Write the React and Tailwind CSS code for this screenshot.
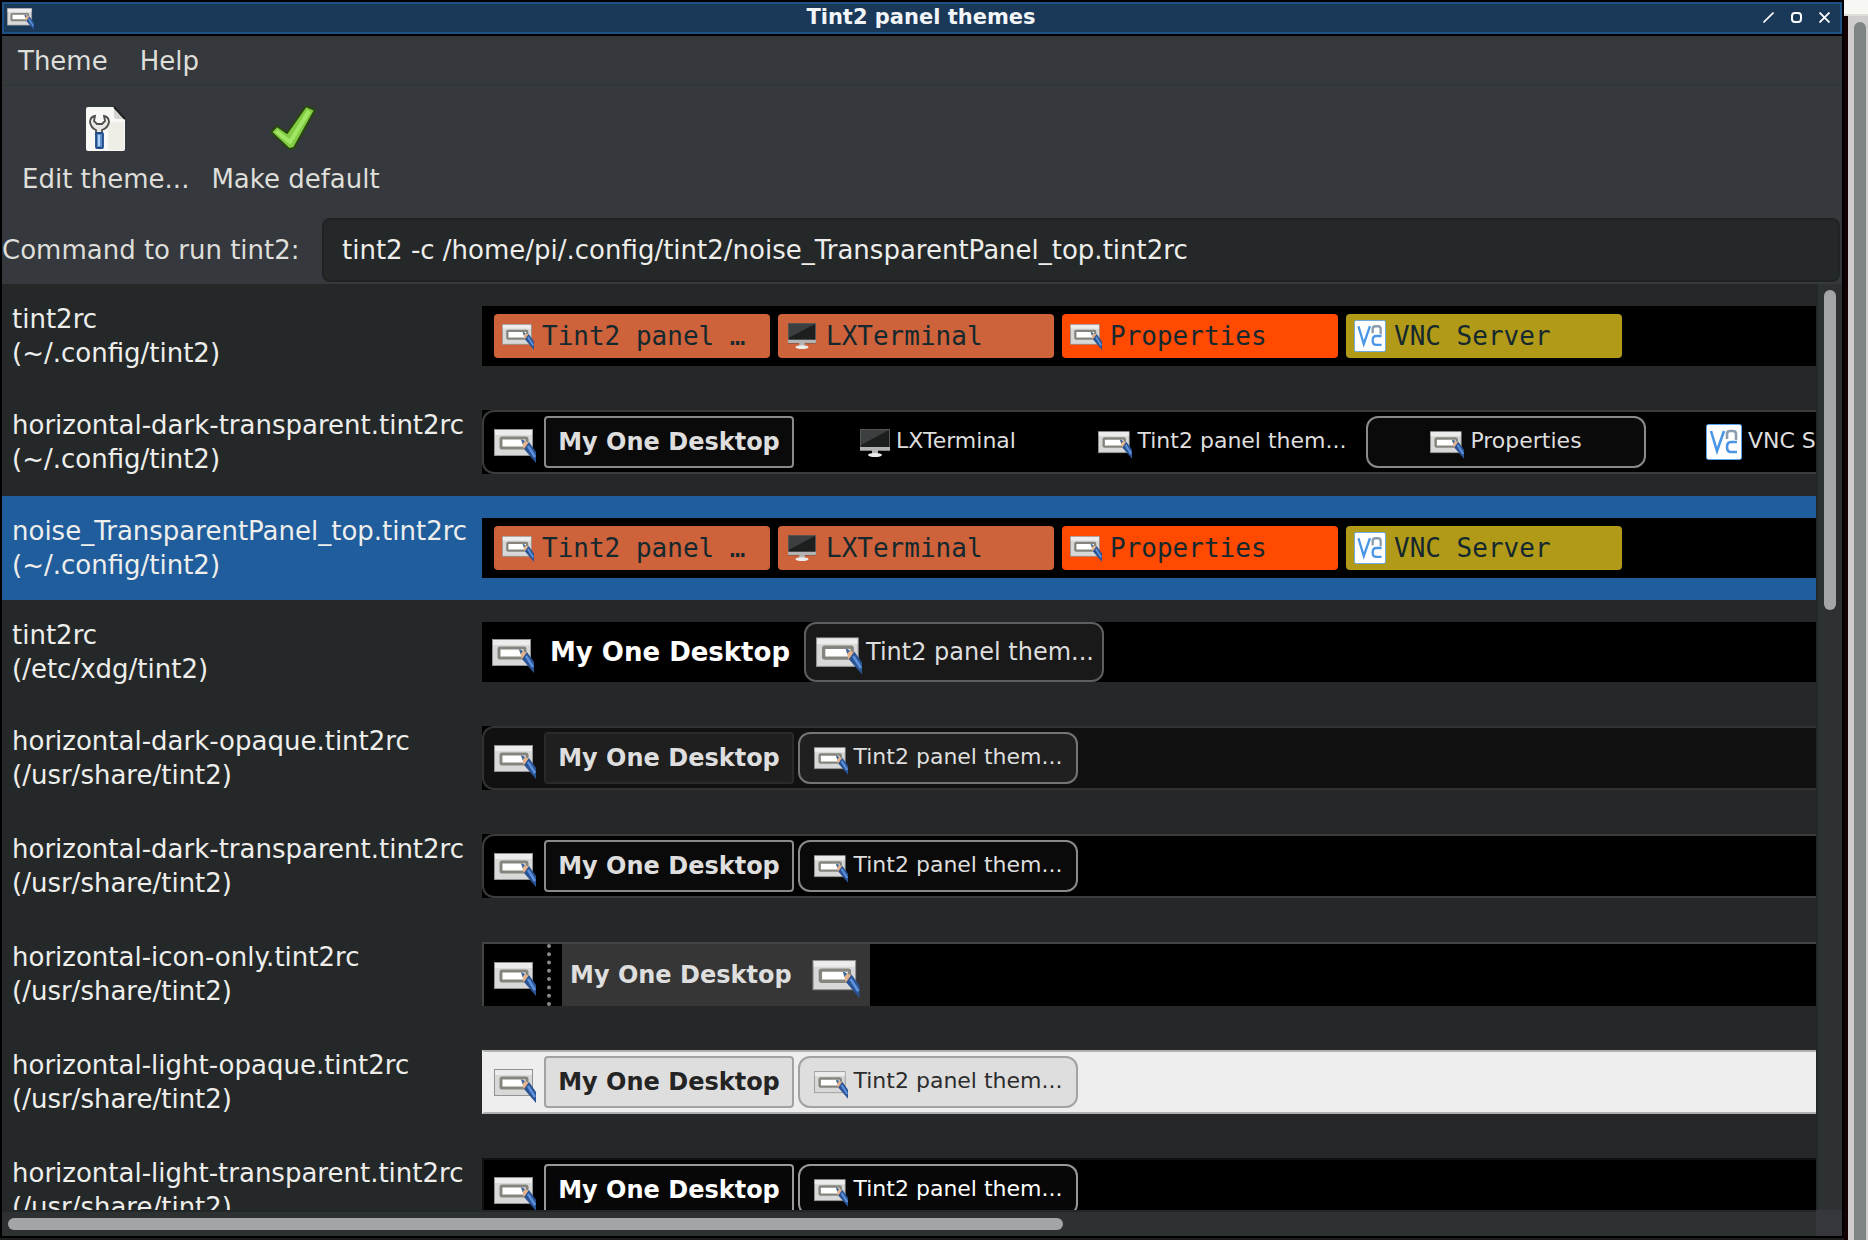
import React from "react";

function PanelIcon({ className }) {
  return (
    <svg viewBox="0 0 42 34" className={className} aria-hidden="true">
      <rect x="0.5" y="0.5" width="38" height="26" fill="#d8d8d8" stroke="#929292" />
      <rect x="1" y="1" width="37" height="5" fill="#ececec" />
      <rect x="7" y="9" width="26" height="10" rx="1" fill="#fff" stroke="#85857e" strokeWidth="3" />
      <path d="M27 10 L35 14 L30 21 Z" fill="#e3b48c" />
      <path d="M27 10 L31 12 L28.6 15 Z" fill="#3465a4" />
      <path d="M35 13 L42 23 L42 34 L30 20 Z" fill="#2a5494" />
      <path d="M34 17 L41 28" stroke="#5f92dc" strokeWidth="2.4" />
    </svg>
  );
}

function MonitorIcon({ className }) {
  return (
    <svg viewBox="0 0 30 28" className={className} aria-hidden="true">
      <rect x="0.5" y="0.5" width="29" height="21" fill="#1d1f1f" stroke="#555" />
      <path d="M1 1 H29 L1 16 Z" fill="#3c3f3f" />
      <rect x="0" y="18" width="30" height="3.5" fill="#b4b4b4" />
      <rect x="12" y="21" width="6" height="4" fill="#b5b5b5" />
      <ellipse cx="15" cy="26" rx="7" ry="2" fill="#ececec" />
    </svg>
  );
}

function VncIcon({ className }) {
  return (
    <svg viewBox="0 0 36 36" className={className} aria-hidden="true" fill="none">
      <rect x="0.5" y="0.5" width="35" height="35" rx="2" fill="#fff" stroke="#5aa2ee" />
      <path d="M5 7 L11 27 L18 7" stroke="#4a96e6" strokeWidth="2.6" />
      <path d="M21 15 V10 Q21 7 24 7 H27 Q30 7 30 10 V16" stroke="#8a9cae" strokeWidth="2.6" />
      <path d="M31 18 H25 Q21 18 21 23 Q21 28 25 28 H31" stroke="#4a96e6" strokeWidth="2.6" />
    </svg>
  );
}

function EditIcon() {
  return (
    <svg viewBox="0 0 40 46" className="h-[46px] w-10" aria-hidden="true">
      <path d="M2 1 H28 L39 13 V43 Q39 45 37 45 H2 Q0 45 0 43 V3 Q0 1 2 1 Z" fill="#f8f8f6" />
      <path d="M22 16 H38 V44 H22 Z" fill="#eeeee6" />
      <path d="M28 1 L39 13 H31 Q28 13 28 10 Z" fill="#d4d4d0" />
      <path d="M28 1 L39 13" stroke="#1e2222" strokeWidth="2" />
      <path
        d="M9 10 Q4 11 4 16 Q5 22 10 24 V28 H16 V24 Q22 22 23 16 Q23 11 18 10 L19 15 L16 18 H11 L8 15 Z"
        fill="#e8e8e4"
        stroke="#4c4f4c"
        strokeWidth="1.8"
      />
      <rect x="10" y="27" width="7" height="15" rx="1" fill="#5b8fcc" stroke="#204a87" strokeWidth="1.8" />
      <path d="M13 29 V40" stroke="#b4d2f4" strokeWidth="2" />
    </svg>
  );
}

function CheckIcon() {
  return (
    <svg viewBox="0 0 52 46" className="h-[46px] w-[52px]" aria-hidden="true">
      <path d="M1 26 L7 20 L17 27 L36 0 L45 4 L24 42 L19 43 Z" fill="#84cc44" stroke="#28480f" strokeWidth="2" strokeLinejoin="round" />
      <path d="M6 25 L20 36 L39 5" fill="none" stroke="#a2e665" strokeWidth="4" />
    </svg>
  );
}

const ICONS = { panel: PanelIcon, monitor: MonitorIcon, vnc: VncIcon };

const NOISE_TASKS = [
  { icon: "panel", size: "mt-[2px] h-[26px] w-8", label: "Tint2 panel …", color: "bg-[#ce623a]" },
  { icon: "monitor", size: "h-[26px] w-7", label: "LXTerminal", color: "bg-[#ce623a]" },
  { icon: "panel", size: "mt-[2px] h-[26px] w-8", label: "Properties", color: "bg-[#ff4a00]" },
  { icon: "vnc", size: "size-8", label: "VNC Server", color: "bg-[#b19a17]" },
];

function NoisePreview() {
  return (
    <div className="flex h-[60px] items-center gap-2 overflow-hidden bg-black pl-3">
      {NOISE_TASKS.map(({ icon, size, label, color }) => {
        const Icon = ICONS[icon];
        return (
          <div key={label} className={`flex h-11 w-[276px] shrink-0 items-center gap-2 rounded-sm pl-2 ${color}`}>
            <span className="flex size-8 items-center justify-center">
              <Icon className={size} />
            </span>
            <span className="whitespace-pre font-['DejaVu_Sans_Mono',monospace] text-[26px] leading-8 text-[#14282e]">
              {label}
            </span>
          </div>
        );
      })}
    </div>
  );
}

const BAR_STYLES = {
  transparent: {
    bar: "rounded-l-xl border-y-2 border-l-2 border-[#3c3c3c] bg-black",
    desk: "border-[#8a8a8a] bg-[#0a0a0a] text-[#dedede]",
    task: "border-[#8a8a8a] bg-[#0a0a0a]",
    text: "text-[#dedede]",
  },
  opaque: {
    bar: "rounded-l-xl border-y-2 border-l-2 border-[#333] bg-[#111]",
    desk: "border-[#2a2a2a] bg-[#1f1f1f] text-[#dedede]",
    task: "border-[#757575] bg-[#202020]",
    text: "text-[#dedede]",
  },
  light: {
    bar: "border-y-2 border-l-2 border-y-[#b0b0b0] border-l-[#eee] bg-[#eee]",
    desk: "border-[#a2a2a2] bg-[#dedede] text-[#242424]",
    task: "border-[#a2a2a2] bg-[#dedede]",
    text: "text-[#2c2c2c]",
  },
  lightTransparent: {
    bar: "border-y-2 border-l-2 border-[#111] bg-black",
    desk: "border-[#999] bg-[#070707] text-white",
    task: "border-[#999] bg-[#070707]",
    text: "text-white",
  },
};

const ONE_TASK = [{ icon: "panel", size: "mt-[6px] h-7 w-[34px]", label: "Tint2 panel them...", active: true }];
const FOUR_TASKS = [
  { icon: "monitor", size: "mt-[2px] h-7 w-[30px]", label: "LXTerminal" },
  { icon: "panel", size: "mt-[6px] h-7 w-[34px]", label: "Tint2 panel them..." },
  { icon: "panel", size: "mt-[6px] h-7 w-[34px]", label: "Properties", active: true },
  { icon: "vnc", size: "size-9", label: "VNC Server" },
];

function BarPreview({ variant, tasks = ONE_TASK }) {
  const s = BAR_STYLES[variant];
  return (
    <div className="h-16 bg-black">
      <div className={`flex h-16 items-center gap-1 overflow-hidden pl-[10px] ${s.bar}`}>
        <PanelIcon className="mr-1 mt-2 h-[34px] w-[42px] shrink-0" />
        <div className={`flex h-[52px] w-[250px] shrink-0 items-center justify-center rounded border-2 text-2xl font-bold ${s.desk}`}>
          My One Desktop
        </div>
        {tasks.map(({ icon, size, label, active }) => {
          const Icon = ICONS[icon];
          return (
            <div
              key={label}
              className={`flex h-[52px] w-[280px] shrink-0 items-center justify-center gap-[6px] rounded-xl border-2 ${active ? s.task : "border-transparent"}`}
            >
              <Icon className={`shrink-0 ${size}`} />
              <span className={`whitespace-nowrap pb-[2px] text-[22px] leading-7 ${s.text}`}>{label}</span>
            </div>
          );
        })}
      </div>
    </div>
  );
}

function XdgPreview() {
  return (
    <div className="flex h-[60px] items-center overflow-hidden bg-black pl-[10px] text-[#dedede]">
      <PanelIcon className="mt-2 h-[34px] w-[42px] shrink-0" />
      <span className="w-[272px] shrink-0 text-center text-[26px] font-bold text-white">My One Desktop</span>
      <div className="-ml-[2px] flex h-[60px] w-[300px] shrink-0 items-center gap-1 rounded-xl border-2 border-[#5e5e5e] bg-[#191919] pl-[10px]">
        <PanelIcon className="mt-2 h-[38px] w-[46px] shrink-0" />
        <span className="whitespace-nowrap text-2xl">Tint2 panel them...</span>
      </div>
    </div>
  );
}

function IconOnlyPreview() {
  return (
    <div className="flex h-16 items-center overflow-hidden border-l-2 border-t-2 border-[#444] bg-black pl-[10px]">
      <PanelIcon className="mt-2 h-[34px] w-[42px] shrink-0" />
      <div className="ml-[11px] mr-[11px] h-full w-0 shrink-0 border-l-4 border-dotted border-[#8a8a8a]" />
      <div className="flex h-full w-[308px] shrink-0 items-center justify-between bg-[#363636] pl-2 pr-[10px]">
        <span className="text-2xl font-bold text-[#dedede]">My One Desktop</span>
        <PanelIcon className="mt-2 h-[38px] w-12 shrink-0" />
      </div>
    </div>
  );
}

const THEMES = [
  { name: "tint2rc", dir: "(~/.config/tint2)", preview: <NoisePreview /> },
  { name: "horizontal-dark-transparent.tint2rc", dir: "(~/.config/tint2)", preview: <BarPreview variant="transparent" tasks={FOUR_TASKS} /> },
  { name: "noise_TransparentPanel_top.tint2rc", dir: "(~/.config/tint2)", preview: <NoisePreview />, selected: true },
  { name: "tint2rc", dir: "(/etc/xdg/tint2)", preview: <XdgPreview /> },
  { name: "horizontal-dark-opaque.tint2rc", dir: "(/usr/share/tint2)", preview: <BarPreview variant="opaque" /> },
  { name: "horizontal-dark-transparent.tint2rc", dir: "(/usr/share/tint2)", preview: <BarPreview variant="transparent" /> },
  { name: "horizontal-icon-only.tint2rc", dir: "(/usr/share/tint2)", preview: <IconOnlyPreview /> },
  { name: "horizontal-light-opaque.tint2rc", dir: "(/usr/share/tint2)", preview: <BarPreview variant="light" /> },
  { name: "horizontal-light-transparent.tint2rc", dir: "(/usr/share/tint2)", preview: <BarPreview variant="lightTransparent" /> },
];

function TitleBar() {
  return (
    <header className="grid h-8 shrink-0 grid-cols-[1fr_auto_1fr] items-center border-2 border-[#1f5187] bg-[#1a3858] pb-[2px] pr-[2px]">
      <PanelIcon className="ml-[3px] mt-1 h-[22px] w-[27px]" />
      <h1 className="text-[21px] font-bold leading-6 text-[#f2f5f8]">Tint2 panel themes</h1>
      <div className="flex justify-end">
        <button aria-label="Minimize" className="flex h-6 w-7 items-center justify-center">
          <svg viewBox="0 0 11 11" className="size-[11px]" stroke="#fff" strokeWidth="1.6"><path d="M0.5 10.5 L10.5 0.5" /></svg>
        </button>
        <button aria-label="Maximize" className="flex h-6 w-7 items-center justify-center">
          <svg viewBox="0 0 11 11" className="size-[11px]" stroke="#fff" strokeWidth="2" fill="none"><rect x="1" y="1" width="9" height="9" rx="3" /></svg>
        </button>
        <button aria-label="Close" className="flex h-6 w-7 items-center justify-center">
          <svg viewBox="0 0 11 11" className="size-[11px]" stroke="#fff" strokeWidth="1.8"><path d="M0.5 0.5 L10.5 10.5 M10.5 0.5 L0.5 10.5" /></svg>
        </button>
      </div>
    </header>
  );
}

export default function App() {
  return (
    <div className="flex h-screen overflow-hidden bg-black font-['DejaVu_Sans',sans-serif] text-[26px] text-[#dededa]">
      <main className="flex min-w-0 flex-1 flex-col">
        <div className="flex min-h-0 flex-1 flex-col border-2 border-black bg-[#35383c]">
          <TitleBar />
          <nav className="flex h-[52px] shrink-0 items-center gap-8 border-b-2 border-t-2 border-b-[#303836] border-t-black pl-4 pt-[2px]">
            <button>Theme</button>
            <button>Help</button>
          </nav>
          <div className="flex h-[130px] shrink-0 items-start gap-[22px] pl-5 pt-5">
            <button className="flex flex-col items-center gap-2">
              <EditIcon />
              <span>Edit theme...</span>
            </button>
            <button className="flex flex-col items-center gap-2">
              <CheckIcon />
              <span>Make default</span>
            </button>
          </div>
          <div className="flex h-[68px] shrink-0 items-center pr-[2px]">
            <label htmlFor="command" className="w-80 shrink-0 whitespace-nowrap">Command to run tint2:</label>
            <input
              id="command"
              type="text"
              defaultValue="tint2 -c /home/pi/.config/tint2/noise_TransparentPanel_top.tint2rc"
              className="h-16 min-w-0 flex-1 rounded-lg border-2 border-[#1f2323] bg-[#242828] px-[18px] text-[#eeeeec] outline-none"
            />
          </div>
          <div className="flex min-h-0 flex-1">
            <ul className="min-w-0 flex-1 overflow-hidden bg-[#252829]">
              {THEMES.map(({ name, dir, preview, selected }, i) => (
                <li key={i} className={`flex items-center py-[22px] text-[#eeeeec] ${selected ? "bg-[#205d9d]" : ""}`}>
                  <div className="-my-1 w-[480px] shrink-0 whitespace-nowrap pl-[10px] leading-[34px]">
                    <p>{name}</p>
                    <p>{dir}</p>
                  </div>
                  <div className="min-w-0 flex-1">{preview}</div>
                </li>
              ))}
            </ul>
            <div className="w-[26px] shrink-0 border-l-2 border-[#222727] bg-[#2d3132] pl-[6px] pt-[6px]">
              <div className="h-80 w-3 rounded-full bg-[#a3a6a6]" />
            </div>
          </div>
          <div className="flex h-[26px] shrink-0">
            <div className="flex-1 border-t-2 border-[#222727] bg-[#2d3132] pl-[6px] pt-[6px]">
              <div className="h-3 w-7/12 rounded-full bg-[#a3a6a6]" />
            </div>
            <div className="w-[26px] bg-[#35373d]" />
          </div>
        </div>
        <div className="h-[2px] shrink-0 bg-[#1c1c1c]" />
      </main>
      <aside className="flex w-6 shrink-0 flex-col">
        <div className="h-4 border-b-2 border-[#deded9] bg-[#f7f7f3]" />
        <div className="flex flex-1 justify-end border-l-4 border-[#140003] bg-[#cfcdcd] pr-[2px] pt-[6px]">
          <div className="w-3 rounded-t-full bg-[#7e8383]" />
        </div>
      </aside>
    </div>
  );
}
